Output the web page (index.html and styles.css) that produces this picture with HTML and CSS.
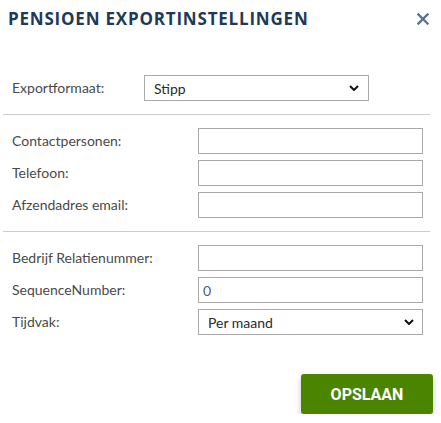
FILE: index.html
```html
<!DOCTYPE html>
<html lang="nl">
<head>
<meta charset="utf-8">
<title>Pensioen exportinstellingen</title>
<link rel="stylesheet" href="styles.css">
</head>
<body>
<div class="dialog">
  <header class="header">
    <h1 class="title">PENSIOEN EXPORTINSTELLINGEN</h1>
    <button class="close" aria-label="Sluiten">
      <svg width="12" height="12" viewBox="0 0 12 12"><path d="M1.5 1.5 L10.5 10.5 M10.5 1.5 L1.5 10.5" stroke="#5a7490" stroke-width="2.4" stroke-linecap="square"/></svg>
    </button>
  </header>

  <section class="format-row">
    <label class="label">Exportformaat:</label>
    <div class="select select-format">
      <span>Stipp</span>
      <svg class="chev" width="10" height="6" viewBox="0 0 10 6"><path d="M1 1 L5 5 L9 1" fill="none" stroke="#111" stroke-width="2"/></svg>
    </div>
  </section>

  <hr class="divider">

  <section class="fields">
    <label class="label">Contactpersonen:</label>
    <input class="input" type="text">
    <label class="label">Telefoon:</label>
    <input class="input" type="text">
    <label class="label">Afzendadres email:</label>
    <input class="input" type="text">
  </section>

  <hr class="divider">

  <section class="fields">
    <label class="label">Bedrijf Relatienummer:</label>
    <input class="input" type="text">
    <label class="label">SequenceNumber:</label>
    <input class="input num" type="text" value="0">
    <label class="label">Tijdvak:</label>
    <div class="select select-period">
      <span>Per maand</span>
      <svg class="chev" width="10" height="6" viewBox="0 0 10 6"><path d="M1 1 L5 5 L9 1" fill="none" stroke="#111" stroke-width="2"/></svg>
    </div>
  </section>

  <footer class="footer">
    <button class="save">OPSLAAN</button>
  </footer>
</div>
</body>
</html>
```

FILE: styles.css
```css
* { box-sizing: border-box; }

html, body {
  margin: 0;
  padding: 0;
  background: #ffffff;
}

body {
  font-family: Lato, "Open Sans", sans-serif;
  font-size: 14px;
  color: #4a4a4a;
}

.dialog {
  width: 441px;
  padding: 0 11px 0 3px;
}

.header {
  display: flex;
  justify-content: space-between;
  align-items: center;
  height: 37px;
  padding: 0 1px 0 5px;
}

.title {
  margin: 0;
  font-family: "Open Sans", sans-serif;
  font-size: 17px;
  font-weight: 700;
  letter-spacing: 0.8px;
  color: #1e3a56;
  line-height: 22px;
}

.close {
  border: 0;
  background: none;
  padding: 0;
  width: 12px;
  height: 12px;
  display: flex;
}

.format-row {
  display: grid;
  grid-template-columns: 132px 225px;
  align-items: center;
  margin-top: 38px;
  padding-left: 9px;
}

.label {
  line-height: 18px;
  color: #4a4a4a;
}

.select {
  height: 26px;
  border: 1px solid #aaaaaa;
  display: flex;
  align-items: center;
  justify-content: space-between;
  color: #2a2a2a;
  font-size: 14px;
}

.select-format {
  padding: 0 9px 0 9px;
}

.select-period {
  padding: 0 8px 0 9px;
}

.chev {
  display: block;
}

.divider {
  border: 0;
  border-top: 1px solid #cccccc;
  margin: 13px 0 13px 0;
  height: 0;
}

.fields {
  display: grid;
  grid-template-columns: 186px 225px;
  row-gap: 6px;
  align-items: center;
  padding-left: 9px;
}

.input {
  height: 26px;
  border: 1px solid #aaaaaa;
  border-radius: 0;
  padding: 0 4px;
  font-family: inherit;
  font-size: 14px;
  color: #2a2a2a;
  width: 225px;
  margin: 0;
}

.num {
  color: #4a5f7a;
}

.footer {
  display: flex;
  justify-content: flex-end;
  margin-top: 39px;
  margin-right: -3px;
}

.save {
  width: 132px;
  height: 40px;
  border: 0;
  border-radius: 3px;
  background: #4b8500;
  color: #ffffff;
  font-family: Roboto, "Liberation Sans", sans-serif;
  font-weight: 700;
  font-size: 16px;
  letter-spacing: 0;
  box-shadow: 0 3px 6px rgba(0, 0, 0, 0.22);
}
```
